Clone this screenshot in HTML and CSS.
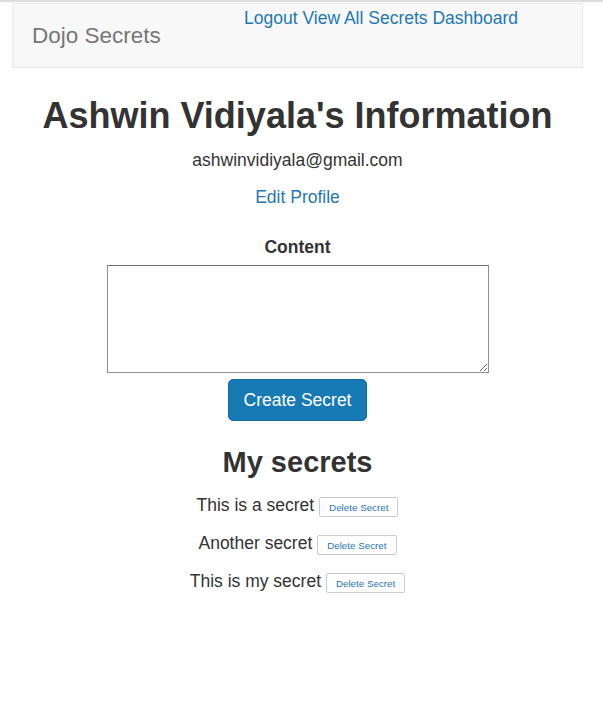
FILE: index.html
```html
<!DOCTYPE html>
<html>
<head>
<meta charset="utf-8">
<title>Dojo Secrets</title>
<link rel="stylesheet" href="styles.css">
</head>
<body>
<div class="page">
  <nav class="navbar">
    <div class="brand">Dojo Secrets</div>
    <div class="nav-links"><a href="#">Logout</a> <a href="#">View All Secrets</a> <a href="#">Dashboard</a></div>
  </nav>
  <main class="main">
    <h1 class="title">Ashwin Vidiyala's Information</h1>
    <p class="email">ashwinvidiyala@gmail.com</p>
    <a class="edit" href="#">Edit Profile</a>
    <form class="secret-form">
      <label class="label" for="content">Content</label>
      <textarea id="content" class="content"></textarea>
      <button type="button" class="btn-primary">Create Secret</button>
    </form>
    <h2 class="subtitle">My secrets</h2>
    <div class="secrets">
      <div class="secret">This is a secret <button type="button" class="btn-delete">Delete Secret</button></div>
      <div class="secret">Another secret <button type="button" class="btn-delete">Delete Secret</button></div>
      <div class="secret">This is my secret <button type="button" class="btn-delete">Delete Secret</button></div>
    </div>
  </main>
</div>
</body>
</html>
```

FILE: styles.css
```css
* { box-sizing: border-box; }
html, body { margin: 0; padding: 0; background: #fff; }
body {
  font-family: "Liberation Sans", Arial, sans-serif;
  font-size: 17.5px;
  color: #333;
  border-top: 2px solid #dcdcdc;
}
a { color: #1f78b4; text-decoration: none; }
.page { width: 595px; padding-bottom: 40px; }
.navbar {
  margin: 1px 12px 0 12px;
  height: 65px;
  background: #f8f8f8;
  border: 1px solid #e7e7e7;
  display: flex;
  align-items: flex-start;
}
.brand {
  width: 231px;
  padding-left: 19px;
  margin-top: 21px;
  font-size: 22.5px;
  line-height: 22px;
  color: #777;
}
.nav-links {
  margin-top: 4px;
  font-size: 17.5px;
  line-height: 20px;
  white-space: nowrap;
}
.main {
  display: flex;
  flex-direction: column;
  align-items: center;
  text-align: center;
}
.title {
  margin: 28px 0 0;
  font-size: 36px;
  line-height: 40px;
  font-weight: bold;
}
.email {
  margin: 13px 0 0;
  line-height: 22px;
}
.edit {
  margin-top: 14.5px;
  line-height: 22px;
}
.secret-form {
  margin-top: 28.5px;
  display: flex;
  flex-direction: column;
  align-items: center;
}
.label {
  font-weight: bold;
  line-height: 22px;
}
.content {
  margin-top: 7px;
  width: 382px;
  height: 108px;
  border: 1px solid #8f8f8f;
  border-top-color: #6f6f6f;
  font-family: inherit;
  padding: 2px;
}
.btn-primary {
  margin-top: 6px;
  height: 42px;
  padding: 9px 15px;
  font-family: inherit;
  font-size: 17.5px;
  line-height: 22px;
  color: #fff;
  background: #177ab5;
  border: 1px solid #146ca1;
  border-radius: 5px;
}
.subtitle {
  margin: 24.5px 0 0;
  font-size: 29px;
  line-height: 33px;
  font-weight: bold;
}
.secrets {
  margin-top: 15.5px;
  display: flex;
  flex-direction: column;
  align-items: center;
  gap: 15px;
}
.secret {
  line-height: 22px;
  white-space: nowrap;
}
.btn-delete {
  height: 20px;
  padding: 3px 9px 2px;
  font-family: inherit;
  font-size: 9.8px;
  line-height: 13px;
  color: #2a76b3;
  background: #fff;
  border: 1px solid #ccc;
  border-radius: 2px;
  vertical-align: baseline;
}
```
